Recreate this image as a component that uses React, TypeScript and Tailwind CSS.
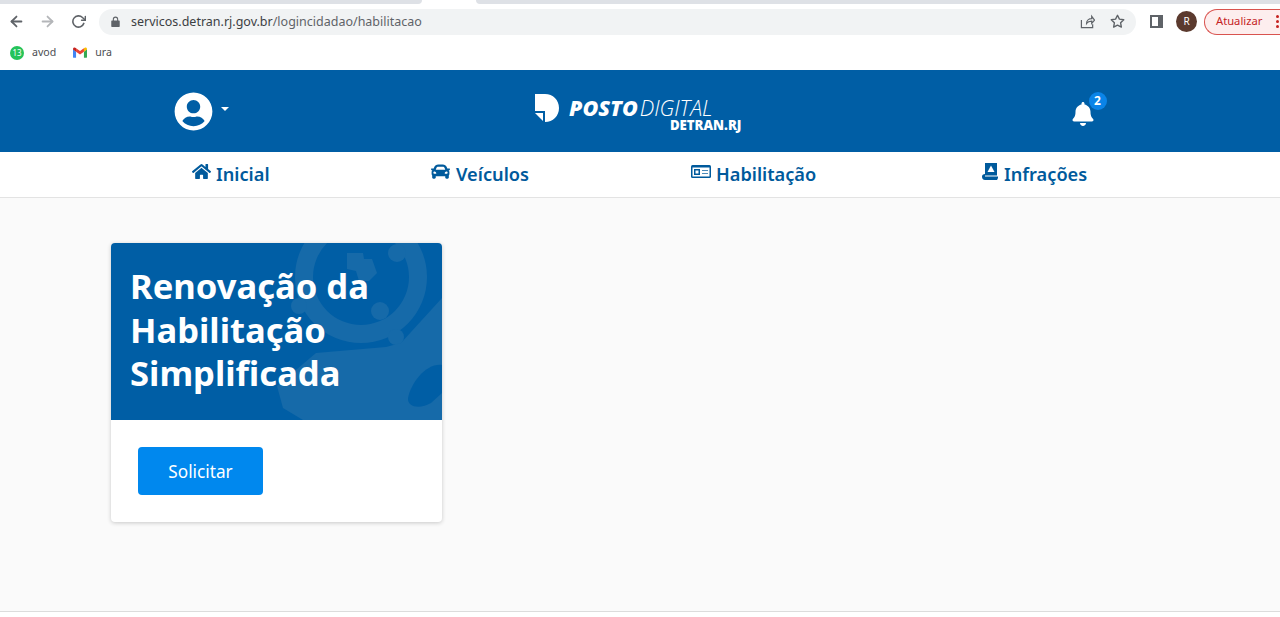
import React from 'react';
import { FaBell, FaCar, FaHome, FaUserCircle } from 'react-icons/fa';
import { FiArrowLeft, FiArrowRight, FiRotateCw, FiStar } from 'react-icons/fi';

const sans = "font-['Noto_Sans','Open_Sans',sans-serif]";

function FineIcon() {
  return (
    <svg viewBox="0 0 16 17" className="w-[16px] h-[17px]" fill="currentColor">
      <path d="M3 0h12v12.500H3z" />
      <path d="M9 2.500 12.500 9h-7z" fill="#fff" />
      <path d="M0 13.500C0 12 1.200 11 3 11v2.500h13V15l-1 2H3c-2 0-3-1.500-3-3.500z" />
    </svg>
  );
}

function LicenseIcon() {
  return (
    <svg viewBox="0 0 20 13" className="w-[20px] h-[13px]">
      <rect width="20" height="13" rx="1.500" fill="currentColor" />
      <rect x="1.500" y="2.500" width="17" height="9" fill="#fff" />
      <rect x="3" y="4" width="6" height="6" fill="currentColor" />
      <rect x="4.500" y="5.500" width="3" height="3" fill="#fff" />
      <path d="M11 5h6v1h-6zM11 8h6v1h-6z" fill="currentColor" fillOpacity="0.7" />
    </svg>
  );
}

const navItems = [
  { label: 'Inicial', icon: <FaHome className="w-[19px] h-[17px]" />, slot: 'w-[239px]', gap: 'gap-[5px]' },
  { label: 'Veículos', icon: <FaCar className="w-[19px] h-[19px]" />, slot: 'w-[260px]', gap: 'gap-[6px]' },
  { label: 'Habilitação', icon: <LicenseIcon />, slot: 'w-[291px]', gap: 'gap-[5px]' },
  { label: 'Infrações', icon: <FineIcon />, slot: 'w-[110px]', gap: 'gap-[6px]' },
];

function GmailIcon() {
  return (
    <svg viewBox="0 0 16 12" className="w-[14px] h-[11px]">
      <path d="M0 2v9a1 1 0 0 0 1 1h2.500V5z" fill="#4285f4" />
      <path d="M16 2v9a1 1 0 0 1-1 1h-2.500V5z" fill="#34a853" />
      <path d="M3.500 5 8 8.300 12.500 5V1L8 4.300 3.500 1z" fill="#ea4335" />
      <path d="M0 2c0-1.800 2-2.500 3.500-1v4L0 2.500z" fill="#c5221f" />
      <path d="M16 2c0-1.800-2-2.500-3.500-1v4L16 2.500z" fill="#fbbc04" />
    </svg>
  );
}

function BrowserChrome() {
  return (
    <div className={`h-[70px] bg-white flex flex-col ${sans}`}>
      <div className="h-[4px] flex">
        <div className="w-[422px] bg-[#dee1e6] rounded-br-lg" />
        <div className="w-[54px]" />
        <div className="flex-1 bg-[#dee1e6] rounded-bl-lg" />
      </div>
      <div className="h-[35px] flex items-center pl-[8px] pr-0 text-[#5f6368]">
        <FiArrowLeft className="w-[17px] h-[17px] stroke-[2.500]" />
        <FiArrowRight className="w-[17px] h-[17px] ml-[14px] text-[#b4b6b9] stroke-[2.500]" />
        <FiRotateCw className="w-[15px] h-[15px] ml-[15px] stroke-[2.500]" />
        <div className="ml-[13px] w-[1037px] h-[26px] rounded-full bg-[#f1f3f4] flex items-center pl-[12px] pr-[11px]">
          <svg viewBox="0 0 10 12" className="w-[9px] h-[11px]" fill="#5f6368">
            <path d="M1 5h1V3.500a3 3 0 0 1 6 0V5h1a.700.700 0 0 1 .700.700v5.600A.700.700 0 0 1 9 12H1a.700.700 0 0 1-.700-.700V5.700A.700.700 0 0 1 1 5zm2.200 0h3.600V3.500a1.800 1.800 0 0 0-3.600 0z" />
          </svg>
          <span className="ml-[11px] pt-[1px] text-[12.500px] leading-none text-[#5f6368]">
            <span className="text-[#3c4043]">servicos.detran.rj.gov.br</span>/logincidadao/habilitacao
          </span>
          <svg viewBox="0 0 16 16" className="ml-auto w-[15px] h-[15px]" fill="none" stroke="#5f6368" strokeWidth="1.300">
            <path d="M1.500 6.500v8h12V11M7 10c0-3 2.500-5 5.500-5V2.500L15.500 6.500 12.500 10V7.500C10 7.500 8 8.500 7 10z" />
          </svg>
          <FiStar className="ml-[15px] w-[15px] h-[15px] stroke-[2.200]" />
        </div>
        <div className="ml-[14px] w-[13px] h-[13px] border-[2px] border-[#5f6368] border-r-[5px] bg-white" />
        <div className="ml-[13px] w-[21px] h-[21px] rounded-full bg-[#5b3a2e] text-white text-[10px] flex items-center justify-center">R</div>
        <div className="ml-[7px] flex-1 h-[26px] rounded-l-full border border-r-0 border-[#d9534f] bg-[#fdeeee] flex items-center pl-[11px] text-[#c5221f] text-[11.200px]">
          Atualizar
          <div className="ml-auto mr-[1px] flex flex-col gap-[2px]">
            <span className="w-[3px] h-[3px] rounded-full bg-[#c5221f]" />
            <span className="w-[3px] h-[3px] rounded-full bg-[#c5221f]" />
            <span className="w-[3px] h-[3px] rounded-full bg-[#c5221f]" />
          </div>
        </div>
      </div>
      <div className="h-[27px] flex items-center pl-[10px] text-[10.600px] text-[#4a4d51]">
        <div className="w-[14px] h-[14px] rounded-full bg-[#25c35a] text-white text-[8px] flex items-center justify-center leading-none">13</div>
        <span className="ml-[8px]">avod</span>
        <span className="ml-[17px] flex items-center"><GmailIcon /></span>
        <span className="ml-[8px]">ura</span>
      </div>
      <div className="h-[4px]" />
    </div>
  );
}

function AppHeader() {
  return (
    <header className="h-[82px] bg-[#005ea5] flex items-center text-white">
      <div className="w-[174px]" />
      <FaUserCircle className="w-[39px] h-[39px]" />
      <span className="ml-[8px] mb-[4px] w-0 h-0 border-x-[4px] border-x-transparent border-t-[4px] border-t-white" />
      <div className="ml-[305px] flex items-start">
        <svg viewBox="0 0 26 28" className="w-[26px] h-[28px] mt-[4px]" fill="#fff">
          <path d="M1 0h10c8 0 14 6 14 14s-6 14-14 14V17H1z" />
          <path d="M1 19h8v8z" />
        </svg>
        <div className="ml-[9px] pt-[7px] flex flex-col items-end">
          <div className="flex items-baseline italic leading-none text-[21.500px]">
            <span className="font-['Open_Sans',sans-serif] font-extrabold">POSTO</span>
            <span className="font-['Open_Sans',sans-serif] font-light ml-[2px]">DIGITAL</span>
          </div>
          <span className="font-['Open_Sans',sans-serif] font-extrabold text-[13.200px] leading-none mr-[-29px]">DETRAN.RJ</span>
        </div>
      </div>
      <div className="ml-[359px] relative mt-[6px]">
        <FaBell className="w-[22px] h-[24px]" />
        <span className={`absolute top-[-10px] left-[17px] w-[18px] h-[18px] rounded-full bg-[#0a84e8] text-white text-[12px] font-bold flex items-center justify-center ${sans}`}>2</span>
      </div>
    </header>
  );
}

function Nav() {
  return (
    <nav className={`h-[46px] bg-white border-b border-[#e3e3e3] flex items-center pl-[192px] text-[#005a9c] ${sans}`}>
      {navItems.map((item) => (
        <div key={item.label} className={item.slot}>
          <a className={`flex items-center ${item.gap} whitespace-nowrap text-[18.200px] font-semibold leading-none`}>
            <span className="mt-[-5px]">{item.icon}</span>
            {item.label}
          </a>
        </div>
      ))}
    </nav>
  );
}

function CardWatermark() {
  return (
    <svg viewBox="0 0 331 177" className="absolute inset-0 w-full h-full" fill="#166aa9">
      <path fillRule="evenodd" d="M250 -32a66 66 0 1 1 0 132 66 66 0 0 1 0-132zm0 18a48 48 0 1 0 0 96 48 48 0 0 0 0-96z" />
      <circle cx="269" cy="68" r="9" />
      <circle cx="286" cy="10" r="9" />
      <circle cx="188" cy="63" r="8" />
      <circle cx="285" cy="94" r="8" />
      <path d="M236 10h16l1 6h8l5 14-8 8h-10l-3-10-9-2z" />
      <path d="M166 143 205 110l70-6 15-4 41-45v122H192l-20-12z" />
      <path d="M331 122c-16-2-31 18-34 33-1 10 13 11 23 5l11-10z" fill="#005ea5" />
    </svg>
  );
}

function Card() {
  return (
    <div className="w-[331px] h-[279px] bg-white rounded-[4px] shadow-[0_1px_4px_rgba(0,0,0,0.2)] overflow-hidden">
      <div className="relative h-[177px] bg-[#005ea5] pl-[19px] pt-[21px]">
        <CardWatermark />
        <h2 className="relative text-white text-[34.600px] leading-[43.500px] font-bold">
          Renovação da
          <br />
          Habilitação
          <br />
          Simplificada
        </h2>
      </div>
      <div className="pt-[27px] pl-[27px]">
        <button className="w-[125px] h-[48px] pt-[1px] rounded-[4px] bg-[#0088ee] text-white text-[17.200px] flex items-center justify-center">
          Solicitar
        </button>
      </div>
    </div>
  );
}

export default function App() {
  return (
    <div className={`h-[617px] overflow-hidden bg-white flex flex-col ${sans}`}>
      <BrowserChrome />
      <AppHeader />
      <Nav />
      <main className="h-[414px] bg-[#fafafa] border-b border-[#dcdcdc] pl-[111px] pt-[45px]">
        <Card />
      </main>
    </div>
  );
}
